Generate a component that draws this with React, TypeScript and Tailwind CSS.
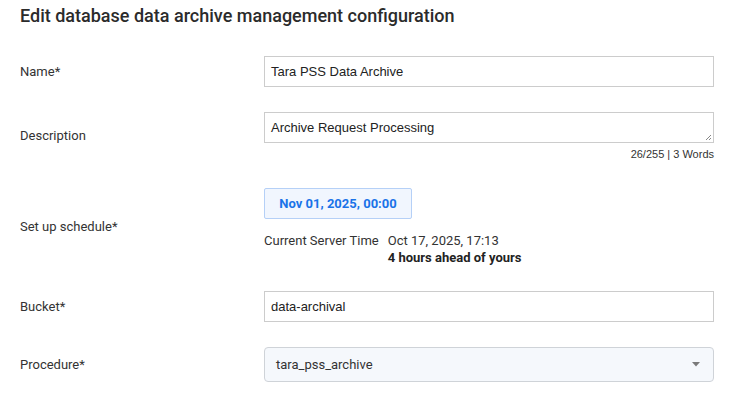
import React from 'react';

const labelFont = { fontFamily: 'Roboto, "Liberation Sans", sans-serif' };
const inputFont = { fontFamily: '"Liberation Sans", Arial, sans-serif' };

interface RowProps {
  label: string;
  className?: string;
  children: React.ReactNode;
}

const FormRow: React.FC<RowProps> = ({ label, className, children }) => (
  <div className={`flex items-center ${className ?? ''}`}>
    <div className="w-[244px] shrink-0 text-[13px] text-[#333]" style={labelFont}>
      {label}
    </div>
    <div className="flex-1">{children}</div>
  </div>
);

const TextBox: React.FC<{ value: string }> = ({ value }) => (
  <div
    className="h-[31px] border border-[#cccccc] bg-white px-[6px] flex items-center text-[13px] text-[#222]"
    style={inputFont}
  >
    {value}
  </div>
);

export default function App() {
  return (
    <div className="w-[737px] h-[408px] bg-white pl-[20px] pr-[23px] pt-[4px]" style={labelFont}>
      <h1 className="text-[18px] leading-[24px] font-medium text-[#2b2b2b]">
        Edit database data archive management configuration
      </h1>

      <div className="mt-[28px] flex flex-col gap-[25px]">
        <FormRow label="Name*">
          <TextBox value="Tara PSS Data Archive" />
        </FormRow>

        <FormRow label="Description">
          <div>
            <div
              className="relative h-[31px] border border-[#cccccc] bg-white px-[6px] flex items-center text-[13px] text-[#222]"
              style={inputFont}
            >
              Archive Request Processing
              {/* resize grip */}
              <svg className="absolute right-[1px] bottom-[1px]" width="8" height="8" viewBox="0 0 8 8">
                <path d="M7 2L2 7M7 5L5 7" stroke="#888" strokeWidth="1" />
              </svg>
            </div>
            <div
              className="mt-[4px] h-[13px] text-right text-[11px] leading-[14px] text-[#333]"
              style={inputFont}
            >
              26/255 | 3 Words
            </div>
          </div>
        </FormRow>

        <FormRow label="Set up schedule*" className="mt-[3px]">
          <div>
            <button className="w-[148px] h-[31px] rounded-[2px] border border-[#b5d0f7] bg-[#f1f6fe] text-[13px] font-bold text-[#1a73e8]">
              Nov 01, 2025, 00:00
            </button>
            <div className="mt-[13px] flex gap-[9px] text-[13px] leading-[17px] text-[#333]">
              <span>Current Server Time</span>
              <div>
                <div>Oct 17, 2025, 17:13</div>
                <div className="font-bold text-[#222]">4 hours ahead of yours</div>
              </div>
            </div>
          </div>
        </FormRow>

        <FormRow label="Bucket*">
          <TextBox value="data-archival" />
        </FormRow>

        <FormRow label="Procedure*">
          <div className="h-[35px] rounded-[4px] border border-[#cfd3d8] bg-[#f5f8fc] pl-[11px] pr-[13px] flex items-center justify-between text-[13px] text-[#333]">
            <span>tara_pss_archive</span>
            <svg width="8" height="5" viewBox="0 0 8 5">
              <path d="M0 0H8L4 4.5Z" fill="#7a7a7a" />
            </svg>
          </div>
        </FormRow>
      </div>
    </div>
  );
}
